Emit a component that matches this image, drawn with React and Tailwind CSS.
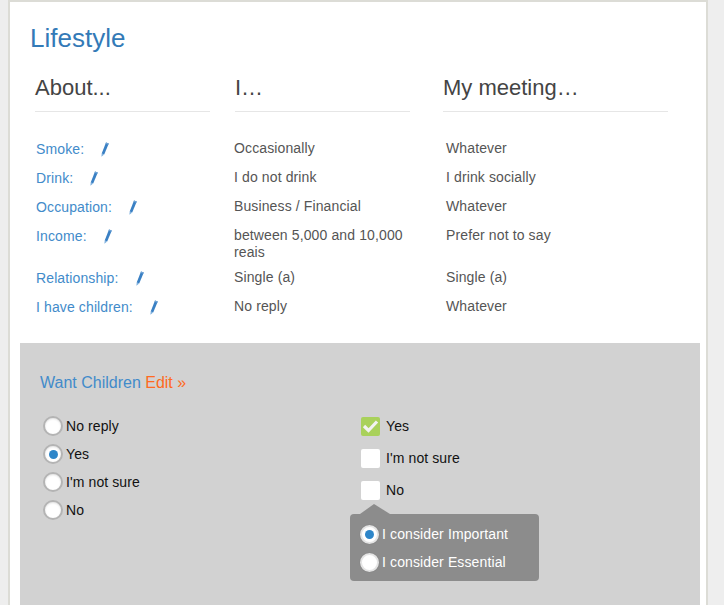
const rows = [
  { label: "Smoke:", a: "Occasionally", b: "Whatever", h: "h-[29px]" },
  { label: "Drink:", a: "I do not drink", b: "I drink socially", h: "h-[29px]" },
  { label: "Occupation:", a: "Business / Financial", b: "Whatever", h: "h-[29px]" },
  { label: "Income:", a: "between 5,000 and 10,000 reais", b: "Prefer not to say", h: "h-[42px]" },
  { label: "Relationship:", a: "Single (a)", b: "Single (a)", h: "h-[29px]" },
  { label: "I have children:", a: "No reply", b: "Whatever", h: "h-[29px]" },
];

function Pencil() {
  return (
    <svg width="8" height="15" viewBox="0 0 8 15" className="block shrink-0">
      <path d="M5 0.4 L7.8 1.5 L3.2 12.5 L0.7 11.5 Z" fill="#3a80c4" />
      <path d="M0.7 11.5 L3.2 12.5 L0.4 14.8 Z" fill="#7fb0dd" />
      <path d="M5 0.4 L7.8 1.5 L7.3 2.8 L4.5 1.7 Z" fill="#6fa3d6" />
    </svg>
  );
}

function Radio({ checked, light }) {
  return (
    <span
      className={
        "flex shrink-0 items-center justify-center rounded-full border-2 bg-white " +
        (light
          ? "ml-[1px] h-[19px] w-[19px] border-[#e4e4e4] shadow-[0_0_1px_rgba(0,0,0,0.2)]"
          : "h-[20px] w-[20px] border-[#b4b4b4] shadow-[inset_0_1px_2px_rgba(0,0,0,0.12)]")
      }
    >
      {checked && <span className="h-[9px] w-[9px] rounded-full bg-[#2e86c9]" />}
    </span>
  );
}

function RadioRow({ label, checked }) {
  return (
    <div className="flex h-[28px] items-center">
      <Radio checked={checked} />
      <span className="ml-[3px] text-[14px] tracking-[0.1px] text-[#111]">{label}</span>
    </div>
  );
}

function CheckRow({ label, checked }) {
  return (
    <div className="flex h-[32px] items-center">
      <span
        className={
          "flex h-[19px] w-[19px] items-center justify-center rounded-[2px] " +
          (checked ? "bg-[#a9d15b]" : "bg-white")
        }
      >
        {checked && (
          <svg width="17" height="14" viewBox="0 0 17 14">
            <path d="M2 7 L6.5 11.5 L15 2.5" fill="none" stroke="#f2f2f2" strokeWidth="3.2" />
          </svg>
        )}
      </span>
      <span className="ml-[6px] text-[14px] tracking-[0.1px] text-[#111]">{label}</span>
    </div>
  );
}

export default function App() {
  return (
    <div className="h-[605px] w-[724px] overflow-hidden bg-[#eeeeee] pl-2 font-['Liberation_Sans',Arial,sans-serif]">
      <div className="h-[620px] w-[700px] border-x-2 border-t-2 border-[#dcdcd6] bg-white pl-[10px] pr-[6px]">
        <h1 className="pl-[10px] pt-[21px] text-[26px] leading-[30px] font-normal text-[#337ab7]">Lifestyle</h1>

        <div className="mt-[20px] flex text-[22px] leading-[26px] text-[#444]">
          <div className="ml-[15px] w-[175px] border-b border-[#e6e6e6] pb-[10px] pt-[2px]">About...</div>
          <div className="ml-[25px] w-[175px] border-b border-[#e6e6e6] pb-[10px] pt-[2px]">I…</div>
          <div className="ml-[33px] w-[225px] border-b border-[#e6e6e6] pb-[10px] pt-[2px]">My meeting…</div>
        </div>

        <div className="mt-[28px] text-[14px] leading-[17px] tracking-[0.12px] text-[#555]">
          {rows.map((r) => (
            <div key={r.label} className={"flex " + r.h}>
              <div className="ml-[16px] flex w-[198px] items-start">
                <span className="pt-[1px] text-[#428bca]">{r.label}</span>
                <span className="ml-[17px] pt-[2px]"><Pencil /></span>
              </div>
              <div className="w-[212px] pr-[30px]">{r.a}</div>
              <div>{r.b}</div>
            </div>
          ))}
        </div>

        <div className="mt-[16px] h-[300px] w-[680px] bg-[#d2d2d2]">
          <div className="pl-[20px] pt-[31px] text-[16px] leading-[18px] text-[#428bca]">
            Want Children <span className="text-[#ff6a21]">Edit »</span>
          </div>
          <div className="mt-[20px] flex">
            <div className="ml-[23px] w-[318px]">
              <RadioRow label="No reply" />
              <RadioRow label="Yes" checked />
              <RadioRow label="I'm not sure" />
              <RadioRow label="No" />
            </div>
            <div className="-mt-[2px]">
              <CheckRow label="Yes" checked />
              <CheckRow label="I'm not sure" />
              <CheckRow label="No" />
              <div className="relative ml-[-11px] mt-[8px] w-[189px] rounded-[4px] bg-[#8c8c8c] px-[9px] pb-[5px] pt-[6px] text-[14px] tracking-[0.12px] text-white">
                <svg width="30" height="10" viewBox="0 0 30 10" className="absolute left-[10px] top-[-10px]">
                  <path d="M0 10 L14 0 L30 10 Z" fill="#8c8c8c" />
                </svg>
                <div className="flex h-[28px] items-center">
                  <Radio checked light />
                  <span className="ml-[3px]">I consider Important</span>
                </div>
                <div className="flex h-[28px] items-center">
                  <Radio light />
                  <span className="ml-[3px]">I consider Essential</span>
                </div>
              </div>
            </div>
          </div>
        </div>
      </div>
    </div>
  );
}
